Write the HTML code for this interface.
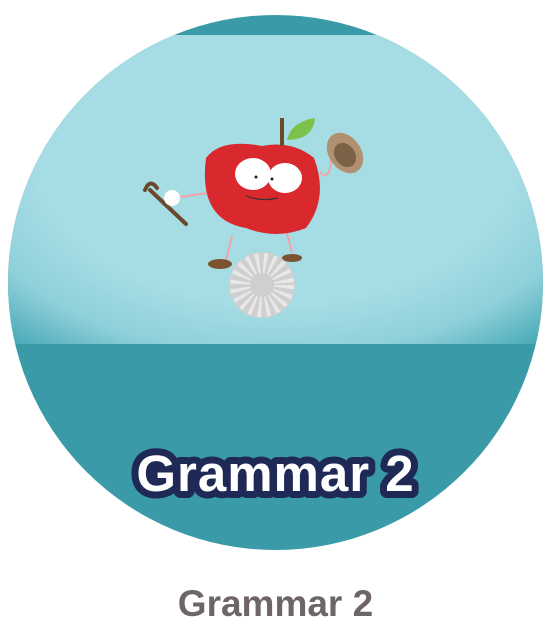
<!DOCTYPE html>
<html><head><style>
body{margin:0;width:551px;height:636px;background:#fff;overflow:hidden;position:relative;font-family:"Liberation Sans",sans-serif}
.c{position:absolute;left:8px;top:15px;width:535px;height:535px;border-radius:50%;overflow:hidden;background:#3a9aa8}
.img{position:absolute;left:0;top:20px;width:535px;height:309px;background:radial-gradient(ellipse 75% 80% at 50% 40%,#a6dce4 60%,#8fd0da 80%,#46a8b6 100%)}
.t{position:absolute;left:0;width:551px;text-align:center;font-weight:bold}
.sub{top:583px;font-size:37px;color:#6e6568}
</style></head><body>
<div class="c"><div class="img"></div></div>
<svg style="position:absolute;left:0;top:0" width="551" height="636">
<path d="M145 190 q5-12 12-2 M150 190 L186 224" stroke="#6b4a2c" stroke-width="4" fill="none" stroke-linecap="round"/>
<circle cx="172" cy="198" r="8" fill="#fff"/>
<line x1="180" y1="197" x2="215" y2="192" stroke="#f3a3a8" stroke-width="2"/>
<path d="M232 236 l-6 25 M286 230 l6 22" stroke="#f3a3a8" stroke-width="2"/>
<ellipse cx="220" cy="264" rx="12" ry="5" fill="#7a5430"/>
<ellipse cx="292" cy="258" rx="10" ry="4" fill="#7a5430"/>
<path d="M262 146 q30-6 52 12 q15 40-8 70 q-30 12-60 0 q-48-8-40-70 q15-20 56-12z" fill="#d9282e"/>
<path d="M282 118 v28" stroke="#6b4a2c" stroke-width="4"/>
<path d="M287 140 q4-18 28-22 q-2 22-28 22z" fill="#7cc24a"/>
<ellipse cx="253" cy="174" rx="18" ry="16" fill="#fff"/><circle cx="256" cy="177" r="1.5" fill="#222"/>
<ellipse cx="285" cy="178" rx="17" ry="15" fill="#fff"/><circle cx="272" cy="179" r="1.5" fill="#222"/>
<path d="M246 196 q16 6 32 2" stroke="#333" stroke-width="1.2" fill="none"/>
<path d="M320 172 q10 12 12-20" stroke="#f3a3a8" stroke-width="2" fill="none"/>
<ellipse cx="345" cy="153" rx="16" ry="22" transform="rotate(-35 345 153)" fill="#b09070"/>
<ellipse cx="345" cy="155" rx="10" ry="13" transform="rotate(-35 345 155)" fill="#7b6247"/>
<circle cx="262" cy="285" r="33" fill="#cfcfcf"/>
<circle cx="262" cy="285" r="22" fill="none" stroke="#e8e8e8" stroke-width="20" stroke-dasharray="3 4"/>
<text x="275.5" y="491" text-anchor="middle" font-family="Liberation Sans" font-weight="bold" font-size="51" fill="#fff" stroke="#1e2a55" stroke-width="14" stroke-linejoin="round" paint-order="stroke" letter-spacing="1">Grammar 2</text>
</svg>
<div class="t sub">Grammar 2</div>
</body></html>
